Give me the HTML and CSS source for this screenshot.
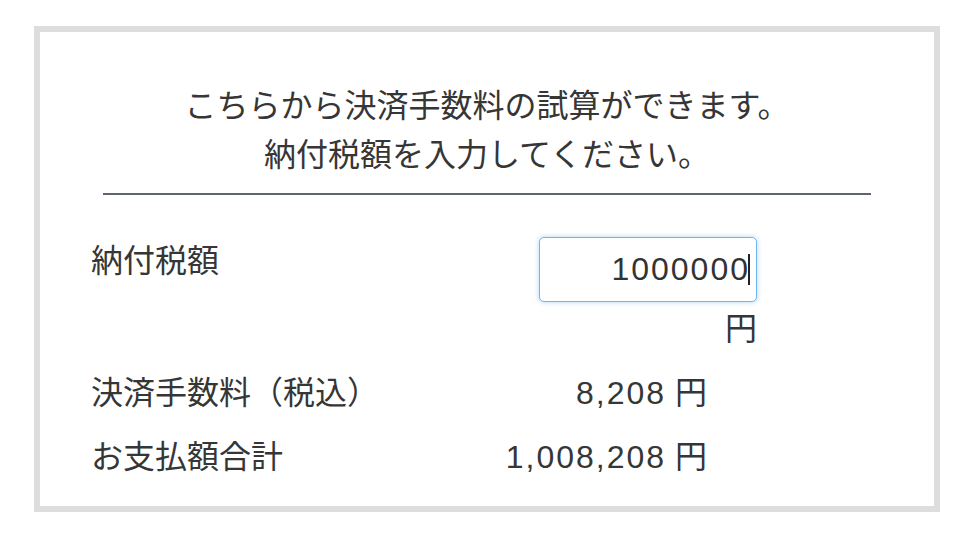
FILE: index.html
```html
<!DOCTYPE html>
<html>
<head>
  <meta charset="utf-8">
  <title>決済手数料の試算</title>
  <link rel="stylesheet" href="styles.css">
</head>
<body>
  <div class="calc">
    <p class="lead">こちらから決済手数料の試算ができます。<br>納付税額を入力してください。</p>
    <hr class="rule">

    <div class="rows">
      <div class="label">納付税額</div>
      <div class="value value-input">
        <span class="field"><input type="text" id="taxAmount" value="1000000"></span>
        <span class="yen">円</span>
      </div>

      <div class="label">決済手数料（税込）</div>
      <div class="value"><span class="num">8,208</span> 円</div>

      <div class="label">お支払額合計</div>
      <div class="value"><span class="num">1,008,208</span> 円</div>
    </div>
  </div>
</body>
</html>
```

FILE: styles.css
```css
/* Podstawowe style */
body {
  margin: 0;
  padding: 26px 0 0 34px;
  background-color: #fff;
  font-family: "Liberation Sans", "Noto Sans CJK JP", sans-serif;
  font-size: 32px;
  color: #363636;
}

.calc {
  box-sizing: border-box;
  width: 906px;
  border: 6px solid #dddddd;
  padding: 50px 0 25px;
}

.lead {
  margin: 0;
  text-align: center;
  line-height: 49px;
}

.rule {
  width: 768px;
  height: 2px;
  margin: 13px auto 0;
  border: none;
  background-color: #5c6670;
}

/* Wiersze kalkulatora */
.rows {
  display: grid;
  grid-template-columns: 370px 296px;
  row-gap: 16px;
  margin-top: 42px;
  padding-left: 51px;
}

.label {
  line-height: 48px;
  white-space: nowrap;
}

.value {
  line-height: 48px;
  text-align: right;
  padding-right: 50px;
  white-space: nowrap;
}

.value-input {
  display: flex;
  flex-direction: column;
  align-items: flex-end;
  padding-right: 0;
}

.num {
  font-family: "Liberation Sans", sans-serif;
  letter-spacing: 2px;
}

.field {
  position: relative;
  display: block;
}

.field input {
  box-sizing: border-box;
  width: 218px;
  height: 65px;
  padding: 0 6px 0 8px;
  border: 1px solid #74b4ef;
  border-radius: 5px;
  box-shadow: 0 0 5px rgba(102, 175, 233, 0.55);
  outline: none;
  font-family: "Liberation Sans", sans-serif;
  font-size: 32px;
  letter-spacing: 2px;
  color: #333;
  text-align: right;
}

/* kursor tekstowy */
.field::after {
  content: "";
  position: absolute;
  right: 7px;
  top: 17px;
  width: 2px;
  height: 31px;
  background-color: #222;
}

.yen {
  margin-top: 3px;
  line-height: 48px;
}
```
